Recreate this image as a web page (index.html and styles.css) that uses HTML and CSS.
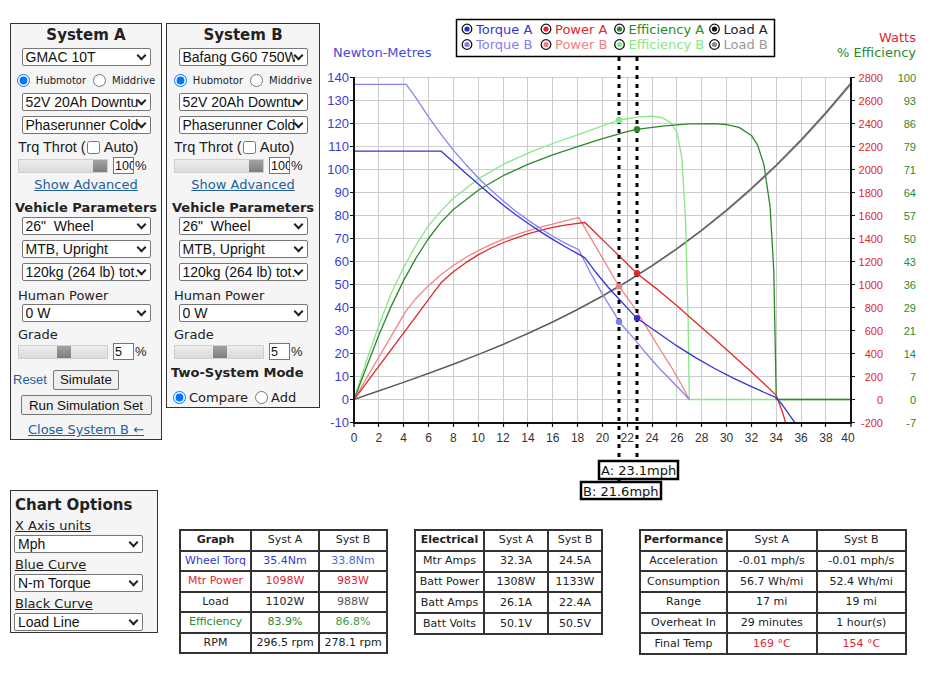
FILE: index.html
```html
<!DOCTYPE html>
<html lang="en">
<head>
<meta charset="utf-8">
<title>Motor Simulator</title>
<link rel="stylesheet" href="styles.css">
</head>
<body>
<div class="top">
  <section class="panel pa">
    <h2 class="ptitle">System A</h2>
    <div class="sel sel-first"><select><option>GMAC 10T</option></select></div>
    <div class="radios"><label><input type="radio" name="ma" checked>Hubmotor</label><label><input type="radio" name="ma">Middrive</label></div>
    <div class="sel"><select><option>52V 20Ah Downtube</option></select></div>
    <div class="sel"><select><option>Phaserunner Cold</option></select></div>
    <div class="line trq">Trq Throt (<input type="checkbox">&nbsp;Auto)</div>
    <div class="slider-row"><span class="track"><span class="thumb thumb-end"></span></span><input class="num" type="text" value="100"><span class="pct">%</span></div>
    <a class="adv" href="#">Show Advanced</a>
    <h3 class="sub">Vehicle Parameters</h3>
    <div class="sel sel-v"><select><option>26"&nbsp; Wheel</option></select></div>
    <div class="sel"><select><option>MTB, Upright</option></select></div>
    <div class="sel"><select><option>120kg (264 lb) tot.</option></select></div>
    <div class="line hp">Human Power</div>
    <div class="sel sel-hp"><select><option>0 W</option></select></div>
    <div class="line grade">Grade</div>
    <div class="slider-row"><span class="track"><span class="thumb thumb-mid"></span></span><input class="num" type="text" value="5"><span class="pct">%</span></div>
    <div class="btn-row"><a class="reset" href="#">Reset</a><button type="button">Simulate</button></div>
    <button type="button" class="runset">Run Simulation Set</button>
    <a class="close" href="#">Close System B ←</a>
  </section>

  <section class="panel pb">
    <h2 class="ptitle">System B</h2>
    <div class="sel sel-first"><select><option>Bafang G60 750W</option></select></div>
    <div class="radios"><label><input type="radio" name="mb" checked>Hubmotor</label><label><input type="radio" name="mb">Middrive</label></div>
    <div class="sel"><select><option>52V 20Ah Downtube</option></select></div>
    <div class="sel"><select><option>Phaserunner Cold</option></select></div>
    <div class="line trq">Trq Throt (<input type="checkbox">&nbsp;Auto)</div>
    <div class="slider-row"><span class="track"><span class="thumb thumb-end"></span></span><input class="num" type="text" value="100"><span class="pct">%</span></div>
    <a class="adv" href="#">Show Advanced</a>
    <h3 class="sub">Vehicle Parameters</h3>
    <div class="sel sel-v"><select><option>26"&nbsp; Wheel</option></select></div>
    <div class="sel"><select><option>MTB, Upright</option></select></div>
    <div class="sel"><select><option>120kg (264 lb) tot.</option></select></div>
    <div class="line hp">Human Power</div>
    <div class="sel sel-hp"><select><option>0 W</option></select></div>
    <div class="line grade">Grade</div>
    <div class="slider-row"><span class="track"><span class="thumb thumb-mid"></span></span><input class="num" type="text" value="5"><span class="pct">%</span></div>
    <h3 class="sub two">Two-System Mode</h3>
    <div class="mode"><label><input type="radio" name="mode" checked>Compare</label><label><input type="radio" name="mode">Add</label></div>
  </section>

  <svg class="chart" width="615" height="490" viewBox="325 0 615 490" xmlns="http://www.w3.org/2000/svg">
    <defs><clipPath id="plot"><rect x="354" y="70" width="497" height="353"/></clipPath></defs>
    <path class="grid" d="M354 77.5H851M354 100.5H851M354 123.5H851M354 146.5H851M354 169.5H851M354 192.5H851M354 215.5H851M354 238.5H851M354 261.5H851M354 284.5H851M354 307.5H851M354 330.5H851M354 353.5H851M354 376.5H851M354 399.5H851M378.5 77V423M403.5 77V423M428.5 77V423M453.5 77V423M478.5 77V423M503.5 77V423M527.5 77V423M552.5 77V423M577.5 77V423M602.5 77V423M627.5 77V423M652.5 77V423M676.5 77V423M701.5 77V423M726.5 77V423M751.5 77V423M776.5 77V423M801.5 77V423M825.5 77V423"/>

    <g clip-path="url(#plot)" fill="none" stroke-width="1.3" stroke-linejoin="round">
      <g transform="translate(354 399.5) scale(12.42 -0.115)">
        <polyline class="c-loadb" vector-effect="non-scaling-stroke" points="0,0 2,74.1 4,149.3 6,226.2 8,306 10,389.4 12,477.7 14,571.7 16,672.2 18,780.3 20,896.8 22,1022.8 24,1159.2 26,1306.7 28,1466.7 30,1639.9 32,1827 34,2029.4 36,2247.8 38,2483.2 40,2736.4"/>
        <polyline class="c-loada" vector-effect="non-scaling-stroke" points="0,0 2,74.5 4,150 6,227.3 8,307.5 10,391.4 12,480.1 14,574.6 16,675.6 18,784.2 20,901.3 22,1027.9 24,1165 26,1313.3 28,1474.1 30,1648.1 32,1836.2 34,2039.6 36,2259.1 38,2495.7 40,2750.2"/>
      </g>
      <g transform="translate(354 399.5) scale(12.42 -3.22)">
        <polyline class="c-effb" vector-effect="non-scaling-stroke" points="0,0 0.5,6 1,12 2,23 3,33 4,41 5,48 6,54 7,58.5 8,62.5 10,68.5 12,73 14,76.5 16,79.5 18,82.2 20,85 21.34,86.8 23,87.8 24,88 24.8,87.5 25.5,86 26,83 26.4,75 26.7,55 26.9,25 27,0 40,0"/>
        <polyline class="c-effa" vector-effect="non-scaling-stroke" points="0,0 0.5,5 1,10 2,20 3,29 4,37 5,44 6,50 7,55 8,59 10,65 12,69.5 14,73 16,76 18,78.5 20,81 22,83.2 22.76,83.9 25,85 27,85.6 29,85.7 30,85.4 31,84.5 32,82 32.5,79 33,73 33.5,60 33.8,40 34,0 40,0"/>
      </g>
      <g transform="translate(354 399.5) scale(12.42 -0.115)">
        <polyline class="c-powb" vector-effect="non-scaling-stroke" points="0,0 4.2,773 5,880 6,990 7,1085 8,1165 9,1235 10,1295 11,1347 12,1392 13,1432 14,1467 15,1498 16,1526 17,1553 18.1,1582 19,1416 20,1231 21,1046 21.34,983 22.5,810 23.5,638 24.5,461 25.5,291 26.3,141 27,0"/>
        <polyline class="c-powa" vector-effect="non-scaling-stroke" points="0,0 7,1015 8,1110 9,1190 10,1258 11,1315 12,1363 13,1404 14,1440 15,1470 16,1496 17,1517 18,1532 18.6,1539 19.5,1444 20.5,1338 21.5,1232 22.76,1098 24.5,951 26,815 27.5,672 29,530 30.5,385 32,240 33,140 34,36 34.5,-111 35,-291 35.5,-482"/>
      </g>
      <g transform="translate(354 399.5) scale(12.42 -2.3)">
        <polyline class="c-trqb" vector-effect="non-scaling-stroke" points="0,137 4.2,137 5,131 6,122.9 7,115.4 8,108.4 9,102.2 10,96.4 11,91.2 12,86.4 13,82 14,78 15,74.4 16,71 17,68 18.1,65.1 19,55.5 20,45.8 21,37.1 21.34,33.8 22.5,26.8 23.5,20.2 24.5,14 25.5,8.5 26.3,4 27,0"/>
        <polyline class="c-trqa" vector-effect="non-scaling-stroke" points="0,108 7,108 8,103.3 9,98.4 10,93.7 11,89 12,84.6 13,80.4 14,76.6 15,73 16,69.6 17,66.4 18,63.4 18.6,61.6 19.5,55.1 20.5,48.6 21.5,42.7 22.76,35.4 24.5,28.9 26,23.3 27.5,18.2 29,13.6 30.5,9.4 32,5.6 33,3.16 34,0.79 34.5,-2.4 35,-6.2 35.5,-10.1 35.8,-12.5"/>
      </g>
    </g>

    <path class="axis" d="M354 77V424M353 423H852M851 77V424"/>
    <path class="tick" d="M350 77.5H354M350 100.5H354M350 123.5H354M350 146.5H354M350 169.5H354M350 192.5H354M350 215.5H354M350 238.5H354M350 261.5H354M350 284.5H354M350 307.5H354M350 330.5H354M350 353.5H354M350 376.5H354M350 399.5H354M350 422.5H354M851 77.5H855M851 100.5H855M851 123.5H855M851 146.5H855M851 169.5H855M851 192.5H855M851 215.5H855M851 238.5H855M851 261.5H855M851 284.5H855M851 307.5H855M851 330.5H855M851 353.5H855M851 376.5H855M851 399.5H855M851 422.5H855M354 423V427M378.5 423V427M403.5 423V427M428.5 423V427M453.5 423V427M478.5 423V427M503.5 423V427M527.5 423V427M552.5 423V427M577.5 423V427M602.5 423V427M627.5 423V427M652.5 423V427M676.5 423V427M701.5 423V427M726.5 423V427M751.5 423V427M776.5 423V427M801.5 423V427M825.5 423V427M851 423V427"/>

    <g class="lab-l">
      <text x="349" y="82">140</text><text x="349" y="105">130</text><text x="349" y="128">120</text><text x="349" y="151">110</text><text x="349" y="174">100</text><text x="349" y="197">90</text><text x="349" y="220">80</text><text x="349" y="243">70</text><text x="349" y="266">60</text><text x="349" y="289">50</text><text x="349" y="312">40</text><text x="349" y="335">30</text><text x="349" y="358">20</text><text x="349" y="381">10</text><text x="349" y="404">0</text><text x="349" y="427">-10</text>
    </g>
    <g class="lab-w">
      <text x="883" y="81.5">2800</text><text x="883" y="104.5">2600</text><text x="883" y="127.5">2400</text><text x="883" y="150.5">2200</text><text x="883" y="173.5">2000</text><text x="883" y="196.5">1800</text><text x="883" y="219.5">1600</text><text x="883" y="242.5">1400</text><text x="883" y="265.5">1200</text><text x="883" y="288.5">1000</text><text x="883" y="311.5">800</text><text x="883" y="334.5">600</text><text x="883" y="357.5">400</text><text x="883" y="380.5">200</text><text x="883" y="403.5">0</text><text x="883" y="426.5">-200</text>
    </g>
    <g class="lab-e">
      <text x="916" y="81.5">100</text><text x="916" y="104.5">93</text><text x="916" y="127.5">86</text><text x="916" y="150.5">79</text><text x="916" y="173.5">71</text><text x="916" y="196.5">64</text><text x="916" y="219.5">57</text><text x="916" y="242.5">50</text><text x="916" y="265.5">43</text><text x="916" y="288.5">36</text><text x="916" y="311.5">29</text><text x="916" y="334.5">21</text><text x="916" y="357.5">14</text><text x="916" y="380.5">7</text><text x="916" y="403.5">0</text><text x="916" y="426.5">-7</text>
    </g>
    <g class="lab-x">
      <text x="354" y="441.5">0</text><text x="378.8" y="441.5">2</text><text x="403.7" y="441.5">4</text><text x="428.5" y="441.5">6</text><text x="453.4" y="441.5">8</text><text x="478.2" y="441.5">10</text><text x="503" y="441.5">12</text><text x="527.9" y="441.5">14</text><text x="552.7" y="441.5">16</text><text x="577.6" y="441.5">18</text><text x="602.4" y="441.5">20</text><text x="627.2" y="441.5">22</text><text x="652.1" y="441.5">24</text><text x="676.9" y="441.5">26</text><text x="701.8" y="441.5">28</text><text x="726.6" y="441.5">30</text><text x="751.4" y="441.5">32</text><text x="776.3" y="441.5">34</text><text x="801.1" y="441.5">36</text><text x="826" y="441.5">38</text><text x="848" y="441.5">40</text>
    </g>

    <text class="ttl-nm" x="333" y="57">Newton-Metres</text>
    <text class="ttl-w" x="916" y="42">Watts</text>
    <text class="ttl-e" x="916" y="57">% Efficiency</text>

    <path class="marker" d="M619 57V481"/>
    <path class="marker" d="M637 57V461"/>

    <g class="dots">
      <circle cx="619" cy="120" r="3.2" fill="#86e886"/>
      <circle cx="637" cy="129.3" r="3.2" fill="#2a8a2a"/>
      <circle cx="619" cy="286.4" r="3.2" fill="#f07f7f"/>
      <circle cx="637" cy="273.2" r="3.2" fill="#e2262c"/>
      <circle cx="619" cy="321.8" r="3.2" fill="#7f7ff0"/>
      <circle cx="637" cy="318.1" r="3.2" fill="#2e2ed0"/>
    </g>

    <g class="spd">
      <rect x="599" y="461" width="79" height="18"/>
      <text x="601" y="475">A: 23.1mph</text>
      <rect x="581" y="482" width="80" height="17"/>
      <text x="583" y="495.5">B: 21.6mph</text>
    </g>

    <g class="legend">
      <rect class="lg-box" x="456.5" y="19.5" width="318" height="37"/>
      <circle class="lg-ring" cx="467" cy="29" r="4.8"/><circle cx="467" cy="29" r="2.6" fill="#2e2ed0"/>
      <text x="476" y="33.5" fill="#3535d5">Torque A</text>
      <circle class="lg-ring" cx="546" cy="29" r="4.8"/><circle cx="546" cy="29" r="2.6" fill="#e2262c"/>
      <text x="555" y="33.5" fill="#e2262c">Power A</text>
      <circle class="lg-ring" cx="619.5" cy="29" r="4.8"/><circle cx="619.5" cy="29" r="2.6" fill="#2a8a2a"/>
      <text x="628.5" y="33.5" fill="#2a8a2a">Efficiency A</text>
      <circle class="lg-ring" cx="714.5" cy="29" r="4.8"/><circle cx="714.5" cy="29" r="2.6" fill="#111"/>
      <text x="723.5" y="33.5" fill="#222">Load A</text>
      <circle class="lg-ring" cx="467" cy="44.5" r="4.8"/><circle cx="467" cy="44.5" r="2.6" fill="#7f7ff0"/>
      <text x="476" y="49" fill="#7f7fee">Torque B</text>
      <circle class="lg-ring" cx="546" cy="44.5" r="4.8"/><circle cx="546" cy="44.5" r="2.6" fill="#f07f7f"/>
      <text x="555" y="49" fill="#f07f7f">Power B</text>
      <circle class="lg-ring" cx="619.5" cy="44.5" r="4.8"/><circle cx="619.5" cy="44.5" r="2.6" fill="#86e886"/>
      <text x="628.5" y="49" fill="#86e886">Efficiency B</text>
      <circle class="lg-ring" cx="714.5" cy="44.5" r="4.8"/><circle cx="714.5" cy="44.5" r="2.6" fill="#8c8c8c"/>
      <text x="723.5" y="49" fill="#999">Load B</text>
    </g>
  </svg>
</div>

<div class="bottom">
  <section class="opts">
    <h3 class="otitle">Chart Options</h3>
    <div class="olabel">X Axis units</div>
    <div class="sel osel"><select><option>Mph</option></select></div>
    <div class="olabel">Blue Curve</div>
    <div class="sel osel"><select><option>N-m Torque</option></select></div>
    <div class="olabel">Black Curve</div>
    <div class="sel osel"><select><option>Load Line</option></select></div>
  </section>

  <table class="tbl tg">
    <tr><th>Graph</th><td>Syst A</td><td>Syst B</td></tr>
    <tr class="blue"><td>Wheel Torq</td><td>35.4Nm</td><td class="blue2">33.8Nm</td></tr>
    <tr class="red"><td>Mtr Power</td><td>1098W</td><td>983W</td></tr>
    <tr><td>Load</td><td>1102W</td><td class="grey">988W</td></tr>
    <tr class="green"><td>Efficiency</td><td>83.9%</td><td class="green2">86.8%</td></tr>
    <tr><td>RPM</td><td>296.5 rpm</td><td>278.1 rpm</td></tr>
  </table>

  <table class="tbl te">
    <tr><th>Electrical</th><td>Syst A</td><td>Syst B</td></tr>
    <tr><td>Mtr Amps</td><td>32.3A</td><td>24.5A</td></tr>
    <tr><td>Batt Power</td><td>1308W</td><td>1133W</td></tr>
    <tr><td>Batt Amps</td><td>26.1A</td><td>22.4A</td></tr>
    <tr><td>Batt Volts</td><td>50.1V</td><td>50.5V</td></tr>
  </table>

  <table class="tbl tp">
    <tr><th>Performance</th><td>Syst A</td><td>Syst B</td></tr>
    <tr><td>Acceleration</td><td>-0.01 mph/s</td><td>-0.01 mph/s</td></tr>
    <tr><td>Consumption</td><td>56.7 Wh/mi</td><td>52.4 Wh/mi</td></tr>
    <tr><td>Range</td><td>17 mi</td><td>19 mi</td></tr>
    <tr><td>Overheat In</td><td>29 minutes</td><td>1 hour(s)</td></tr>
    <tr><td>Final Temp</td><td class="red">169 °C</td><td class="red">154 °C</td></tr>
  </table>
</div>
</body>
</html>
```

FILE: styles.css
```css
* { box-sizing: border-box; }
html, body { margin: 0; padding: 0; }
body {
  width: 940px; height: 673px; overflow: hidden;
  background: #fff; color: #222;
  font-family: "DejaVu Sans", Verdana, sans-serif;
}
a { color: #22609c; }

.top { display: flex; align-items: flex-start; height: 490px; }

.panel {
  flex: none; margin-top: 23px;
  border: 1px solid #333; background: #f5f5f5;
  display: flex; flex-direction: column;
}
.pa { margin-left: 10px; width: 152px; height: 417px; }
.pb { margin-left: 4px; width: 154px; height: 385px; }

.ptitle {
  margin: 2px 0 0; height: 18px; line-height: 18px;
  font-size: 15px; font-weight: bold; text-align: center;
}

.sel { position: relative; align-self: center; width: 129px; height: 18px; margin-top: 5px; flex: none; }
.sel select {
  -webkit-appearance: none; appearance: none;
  display: block; width: 100%; height: 100%; margin: 0;
  border: 1px solid #767676; border-radius: 2px; background: #fff;
  font: 14px "Liberation Sans", Arial, sans-serif; color: #111;
  padding: 0 12px 0 3px;
}
.sel::after {
  content: ""; position: absolute; right: 6px; top: 4px;
  width: 5px; height: 5px;
  border-right: 2px solid #222; border-bottom: 2px solid #222;
  transform: rotate(45deg); pointer-events: none;
}
.sel-first { margin-top: 4px; }
.sel-v { margin-top: 1px; }
.sel-hp { margin-top: 0; }

.radios {
  align-self: center; display: flex; align-items: center; gap: 7px;
  height: 16px; margin-top: 6px; font-size: 10px; flex: none;
}
.radios label, .mode label { display: flex; align-items: center; gap: 6px; }
.radios input, .mode input { margin: 0; width: 13px; height: 13px; }

.line {
  height: 16px; line-height: 16px; margin-top: 5px; padding-left: 7px;
  font-size: 13px; display: flex; align-items: center; flex: none; white-space: nowrap;
}
.trq { font: 14.5px "Liberation Sans", Arial, sans-serif; }
.trq input { margin: 0 0 0 1px; width: 13px; height: 13px; }
.hp { margin-top: 7px; }

.slider-row {
  display: flex; align-items: center; height: 17px; margin-top: 2px;
  padding-left: 7px; font: 13px "Liberation Sans", Arial, sans-serif; flex: none;
}
.grade + .slider-row { margin-top: 0; }
.track {
  display: flex; width: 90px; height: 14px;
  background: linear-gradient(#ececec, #dadada);
  border: 1px solid #cfcfcf;
}
.thumb { width: 14px; height: 100%; background: linear-gradient(#a3a3a3, #7e7e7e); }
.thumb-end { margin-left: auto; }
.thumb-mid { margin-left: 38px; }
.num {
  width: 21px; height: 17px; margin: 0 1px 0 5px; padding: 0 0 0 1px;
  border: 1px solid #767676; font: 12.5px "Liberation Sans", Arial, sans-serif; color: #111;
}
.pct { font-size: 13px; }

.adv { align-self: center; margin-top: 3px; height: 16px; line-height: 16px; font-size: 13px; flex: none; }
.sub { margin: 7px 0 0; height: 16px; line-height: 16px; font-size: 13px; font-weight: bold; text-align: center; flex: none; }
.two { margin-top: 5px; text-align: left; padding-left: 4px; }

.btn-row { display: flex; align-items: center; gap: 6px; height: 21px; margin-top: 9px; padding-left: 2px; flex: none; }
.reset { font: 13px "Liberation Sans", Arial, sans-serif; text-decoration: none; }
button {
  height: 20px; padding: 0 6px;
  font: 13.33px "Liberation Sans", Arial, sans-serif; color: #111;
  background: #efefef; border: 1px solid #767676; border-radius: 2px;
}
.runset { align-self: center; margin-top: 5px; width: 131px; flex: none; }
.close { align-self: center; margin-top: 7px; height: 16px; line-height: 16px; font-size: 13px; flex: none; }

.mode { display: flex; align-items: center; gap: 7px; height: 16px; margin-top: 8px; padding-left: 6px; font-size: 13px; }
.mode label { gap: 3px; }

/* chart */
.chart { flex: none; display: block; margin-left: 5px; overflow: visible; }
.grid { stroke: #cdcdcd; stroke-width: 1; fill: none; }
.axis { stroke: #111; stroke-width: 2; fill: none; }
.tick { stroke: #111; stroke-width: 1.2; fill: none; }
.lab-l text { font: 13px "Liberation Sans", Arial, sans-serif; fill: #3c3cd4; text-anchor: end; }
.lab-w text { font: 11px "Liberation Sans", Arial, sans-serif; fill: #e2262c; text-anchor: end; }
.lab-e text { font: 11px "Liberation Sans", Arial, sans-serif; fill: #2a8a2a; text-anchor: end; }
.lab-x text { font: 12px "Liberation Sans", Arial, sans-serif; fill: #333; text-anchor: middle; }
.ttl-nm { font: 13px "DejaVu Sans", Verdana, sans-serif; fill: #4848dc; }
.ttl-w { font: 13px "DejaVu Sans", Verdana, sans-serif; fill: #e2262c; text-anchor: end; }
.ttl-e { font: 13px "DejaVu Sans", Verdana, sans-serif; fill: #2a8a2a; text-anchor: end; }

.c-trqa { stroke: #3535d5; }
.c-trqb { stroke: #8585f2; }
.c-powa { stroke: #e2262c; }
.c-powb { stroke: #f08585; }
.c-effa { stroke: #2a8a2a; }
.c-effb { stroke: #86e886; }
.c-loada { stroke: #5a5a5a; }
.c-loadb { stroke: #9a9a9a; }

.marker { stroke: #000; stroke-width: 3; stroke-dasharray: 4 5; fill: none; }
.spd rect { fill: #fff; stroke: #000; stroke-width: 2.5; }
.spd text { font: 13px "DejaVu Sans", Verdana, sans-serif; fill: #111; }

.legend text { font: 13px "DejaVu Sans", Verdana, sans-serif; }
.lg-box { fill: #fff; stroke: #000; stroke-width: 1.5; }
.lg-ring { fill: #fff; stroke: #111; stroke-width: 1.3; }

/* bottom */
.bottom { display: flex; align-items: flex-start; }
.opts {
  flex: none; margin-left: 10px; width: 148px; height: 143px;
  border: 1px solid #333; background: #f5f5f5;
  padding: 5px 0 0 3px; display: flex; flex-direction: column;
}
.otitle { margin: 0; height: 18px; line-height: 18px; font-size: 15px; font-weight: bold; padding-left: 1px; }
.olabel { margin-top: 4px; height: 16px; line-height: 16px; font-size: 13px; text-decoration: underline; padding-left: 1px; }
.osel { align-self: flex-start; margin-top: 1px; }

.tbl {
  flex: none; margin-top: 39px; border-collapse: collapse;
  font-size: 11px; text-align: center; color: #222;
}
.tbl th, .tbl td { border: 2px solid #333; padding: 0; font-weight: normal; line-height: 14px; }
.tbl th { font-weight: bold; }
.tg { margin-left: 21px; width: 209px; }
.tg td, .tg th { height: 20.5px; }
.tg th { width: 71px; }
.te { margin-left: 26px; width: 189px; }
.te td, .te th { height: 20.8px; }
.te th { width: 69px; }
.te tr td:nth-child(2) { width: 64px; }
.tp { margin-left: 36px; width: 268px; }
.tp td, .tp th { height: 20.7px; }
.tp th { width: 87px; }

.blue { color: #3535d5; }
.blue2 { color: #4a68e0; }
.red { color: #e2262c; }
.grey { color: #555; }
.green { color: #2a8a2a; }
.green2 { color: #3c9c3c; }
```
